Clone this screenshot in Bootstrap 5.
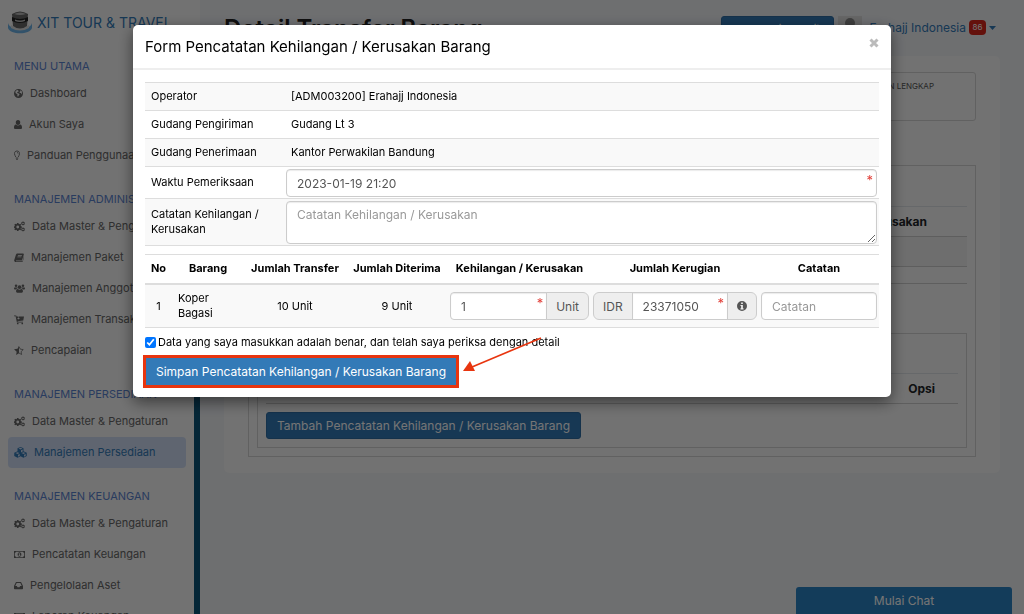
<!DOCTYPE html>
<html lang="id">
<head>
<meta charset="utf-8">
<meta name="viewport" content="width=device-width, initial-scale=1">
<title>Detail Transfer Barang</title>
<link href="https://cdn.jsdelivr.net/npm/bootstrap@5.3.0/dist/css/bootstrap.min.css" rel="stylesheet">
<style>
body{font-family:Inter,"Open Sans",sans-serif;font-size:11px;line-height:15px;color:#000;background:#eff1f5;overflow:hidden}
a{text-decoration:none}
svg{fill:currentColor}
.app{min-height:100vh;max-height:100vh;overflow:hidden}
.sidebar{width:194px;flex:none;background:#f8f8f8;padding:0 8px}
.rail{width:6px;flex:none;background:#f8f8f8;padding-top:190px}
.rail div{background:#0a5478;height:100%}
.brand-link{height:38px;padding-top:6px;gap:5px;color:#337ab7;font-size:14px;white-space:nowrap}
.menu-title{height:40px;padding:17px 6px 0;line-height:23px;font-size:11px;color:#5b83cf;white-space:nowrap;margin:0;font-weight:400}
.menu-item{height:31px;padding:0 6px;gap:7px;font-size:11px;color:#666;border-radius:4px;white-space:nowrap}
.menu-item.active{background:#cfdcf3;color:#337ab7}
.menu-item svg{height:11px;flex:none}
.page{min-width:0;padding:16px 24px}
.page-top{height:40px}
.page-top h1{font-size:24px;line-height:26px;font-weight:600;margin:0;color:#222}
.user-link{color:#337ab7;font-size:12px;gap:3px}
.btn-main{background:#337ab7;border:1px solid #2e6da4;color:#fff;border-radius:3px;font-size:12px;line-height:17px;padding:4px 10px}
.btn-main:hover{background:#286090;color:#fff}
.btn-site{width:113px;font-size:11px;padding:4px 0}
.sheet{background:#f8f8f8;border-radius:5px;padding:16px 24px}
.sheet-box{border:1px solid #d3d3d3}
.sheet-box .table{font-size:12px;margin:0}
.sheet-box .table>*>tr>*{border-color:#ccc;background:none;padding:7px 8px;box-shadow:none}
.sheet-box .table>tbody>.spacer-row>td{height:17px;padding:0}
.sheet-box .table .end-wide{padding-right:40px}
.sheet-box .table .end-narrow{padding-right:23px}
.striped-row{background:#f0f0f0}
.box-info{height:49px;font-size:8px;color:#555;padding:6px 41px;border-radius:3px;margin-bottom:44px}
.box-outer{padding:40px 8px 8px}
.box-inner{padding:39px 8px 8px;margin-top:49px}
.counter{background:#d9261c;color:#fff;font-size:8px;line-height:15px;width:17px;border-radius:4px;text-align:center}
.chat-btn{position:fixed;right:12px;bottom:0;width:216px;height:27px;background:#2a83c4;color:#fff;border:0;border-radius:3px 3px 0 0;font-size:12px}
.modal-backdrop{--bs-backdrop-opacity:.54}
.modal-dialog{width:calc(100% - 48px);max-width:758px;margin:25px auto}
.modal-content{border:0;border-radius:5px;box-shadow:0 5px 15px rgba(0,0,0,.5);color:#000}
.modal-header{height:45px;padding:0 12px;border-bottom:2px solid #eee}
.modal-title{font-size:15px;line-height:22px;font-weight:400}
.close-btn{background:none;border:0;padding:0;color:#bbb;line-height:1;margin-top:-8px}
.modal-body{padding:12px 12px 11px}
.modal-body .table{font-size:11px;margin-bottom:7px;table-layout:fixed;border-bottom:1px solid #ddd}
.modal-body .table.details{margin-bottom:8px}
.modal-body .table>*>tr>*{padding:6px;border:0;border-top:1px solid #ddd;box-shadow:none;color:#000;font-weight:400;background:#fff;vertical-align:middle}
.modal-body .table>tbody>tr:nth-child(odd)>*{background:#f9f9f9}
.modal-body .table.items>thead>tr>*{font-weight:700;text-align:center;padding:6px 0 7px;white-space:nowrap}
.modal-body .table.items>tbody>tr>*{border-top:2px solid #ddd;text-align:center}
.modal-body .table>tbody>tr>.field{padding:2px 2px 1px 1px}
.modal-body .table.items>tbody>tr>.field{padding:0 2px}
.modal-body .form-control{font-size:12px;line-height:17px;padding:4px 10px;height:28px;border:1px solid #ccc;border-radius:4px;color:#555;box-shadow:inset 0 1px 1px rgba(0,0,0,.08)}
.modal-body .form-control::placeholder{color:#999}
.modal-body textarea.form-control{height:43px;min-height:43px;display:block}
.modal-body .has-tail .form-control{border-top-right-radius:0;border-bottom-right-radius:0}
.input-group-text{font-size:12px;line-height:17px;padding:4px 9px;background:#eee;border:1px solid #ccc;color:#555}
.req{position:absolute;right:4px;top:4px;z-index:6;color:#e2403a;font-size:13px;line-height:14px}
.agree{gap:2px;font-size:11px}
.agree input{width:11px;height:11px;margin:0}
.btn.save-btn{border-radius:0;padding:5px 10px;outline:3px solid #e8350f;outline-offset:-1px;margin-top:7px}
.pointer-arrow{position:absolute;left:100%;top:-13px;margin-left:5px;fill:#e8350f;pointer-events:none}
</style>
</head>
<body class="modal-open">
<svg width="0" height="0" class="position-absolute" aria-hidden="true">
<symbol id="i-cogs" viewBox="0 0 22 20"><path fill-rule="evenodd" d="M6 3h3l.4 2 1.4.6 1.8-1.1 1.7 1.8L13.200 8l.6 1.400 2 .4v2.600l-2 .4-.6 1.400 1.100 1.700-1.700 1.800-1.800-1.100-1.400.6L9 19H6l-.4-1.800-1.400-.6-1.800 1.100L.7 15.900l1.100-1.700-.6-1.400-1.200-.4V9.800l1.200-.4L1.800 8 .7 6.300l1.700-1.800 1.800 1.100L5.600 5zm1.500 5.200a2.800 2.800 0 100 5.600 2.800 2.800 0 000-5.600z"/><path fill-rule="evenodd" d="M17 0h2l.4 1.200 1.600.2.8 1.600-.8 1.300.3 1.500-1.500 1-1 .9H17l-.9-1-1.500-.9.2-1.500-.7-1.300 1-1.500 1.500-.2zm1 2.500a1.500 1.500 0 100 3.200 1.500 1.500 0 000-3.200zM17 12h2l.4 1.200 1.600.2.800 1.600-.8 1.300.3 1.500-1.500 1-1 .9H17l-.9-1-1.500-.9.2-1.500-.7-1.300 1-1.500 1.500-.2zm1 2.500a1.500 1.500 0 100 3.200 1.500 1.500 0 000-3.200z"/></symbol>
<symbol id="i-money" viewBox="0 0 22 20"><path fill-rule="evenodd" d="M0 3h22v14H0zm4 1.600A3 3 0 011.600 7v6A3 3 0 014 15.400h14a3 3 0 012.400-2.400V7A3 3 0 0118 4.600zM11 5.500c2.400 0 3.700 2 3.700 4.500s-1.300 4.500-3.700 4.500S7.300 12.500 7.300 10 8.600 5.500 11 5.500zm-.8 1.800L8.800 8.500l.7.9.6-.4v2.700H9v1.200h3.800v-1.200h-1.100V7.300z"/></symbol>
</svg>

<div class="app d-flex">
  <nav class="sidebar" aria-label="Menu">
    <a href="#" class="brand-link d-flex align-items-center">
      <svg width="24" height="24" viewBox="0 0 24 24"><path d="M0 13c2 8 22 8 24 0v5c-2 7-22 7-24 0z" fill="#6eb3e6"/><path d="M3 15q9 6 18 0v3q-9 5-18 0z" fill="#ddd"/><path d="M4 4q8-5 16 0l-1 12q-7 5-14 0z" fill="#666"/><path d="M4 7q8 4 16 0v4q-8 4-16 0z" fill="#222"/><path d="M7 9.500q5 2 10 0v1.500q-5 2-10 0zM6 4q6-3 12 0-6 2-12 0z" fill="#bbb"/></svg>
      <span>XIT TOUR &amp; TRAVEL</span></a>
    <h2 class="menu-title">MENU UTAMA</h2>
    <a href="#" class="menu-item d-flex align-items-center"><svg width="9" viewBox="0 0 18 20"><path fill-rule="evenodd" d="M9 1a9 9 0 110 18A9 9 0 019 1zM8 3L5 3.500 2.800 6l.2 3 2 1.500 2 1-.5 2 1.500 3.500 1-2.500 2-2-.5-2L8 9.500 6 9l1-2 2.500-1zm4 0l1 2-2 2 .5 2 2.500 0 1 3 1-3-.5-3.500z"/></svg>Dashboard</a>
    <a href="#" class="menu-item d-flex align-items-center"><svg width="8" viewBox="0 0 16 20"><path d="M8 1c3 0 4.500 2.200 4.500 5S10.500 11 8 11 3.500 8.800 3.500 6 5 1 8 1zM4 10c2 2.400 6 2.400 8 0 3 0 4 3 4 6 0 2-1 3-3 3H3c-2 0-3-1-3-3 0-3 1-6 4-6z"/></svg>Akun Saya</a>
    <a href="#" class="menu-item d-flex align-items-center"><svg width="6" viewBox="0 0 12 20"><path d="M3.500 13c0-2-2.700-3.500-2.700-6.500C.8 3 3 1 6 1s5.200 2 5.200 5.500c0 3-2.700 4.500-2.700 6.500M3.500 15h5M4 17.500h4M6 4c1.500 0 2.300.8 2.300 2" fill="none" stroke="currentColor" stroke-width="1.700"/></svg>Panduan Penggunaan</a>
    <h2 class="menu-title">MANAJEMEN ADMINISTRASI</h2>
    <a href="#" class="menu-item d-flex align-items-center"><svg width="11"><use href="#i-cogs"/></svg>Data Master &amp; Pengaturan</a>
    <a href="#" class="menu-item d-flex align-items-center"><svg width="10" viewBox="0 0 20 20"><path fill-rule="evenodd" d="M7 2h11c1.500 0 2 1 1.500 2.500L16 16H5c-1.500 0-1.500 1.500 0 1.500h12L20 7c.5 1 0 2 0 3l-2.500 8q-.5 1-2 1H4c-3 0-4-2-3.500-4L4 4c.5-1 1.500-2 3-2zm1 3l-.4 1.400h8L16 5zm-1 3l-.4 1.400h8L15 8z"/></svg>Manajemen Paket</a>
    <a href="#" class="menu-item d-flex align-items-center"><svg width="11" viewBox="0 0 24 20"><circle cx="12" cy="7" r="4"/><circle cx="4.500" cy="4" r="2.800"/><circle cx="19.500" cy="4" r="2.800"/><path d="M8 11q4 3 8 0c3 0 3.500 3 3.500 5.500q0 2.500-2.500 2.500H7q-2.500 0-2.500-2.500C4.500 14 5 11 8 11zM2 7q2.500 1.500 5 0 0 2 .8 3Q5 10 4 12H2q-2 0-2-1.500Q0 7 2 7zM22 7q-2.500 1.500-5 0 0 2-.8 3 2.800 0 3.800 2h2q2 0 2-1.500Q24 7 22 7z"/></svg>Manajemen Anggota</a>
    <a href="#" class="menu-item d-flex align-items-center"><svg width="10" viewBox="0 0 20 20"><path d="M0 2h4.500l.6 2H9v3H6l3 3 3-3h-2V4h10l-1.500 8L7 13.300l.3 1.200H18V16H5.800L3.200 3.600H0z"/><circle cx="7.500" cy="18" r="1.700"/><circle cx="16.500" cy="18" r="1.700"/></svg>Manajemen Transaksi</a>
    <a href="#" class="menu-item d-flex align-items-center"><svg width="10" viewBox="0 0 20 20"><path d="M10 1v14.500L4.200 19l1.200-6.600L0 7.700l7-1z"/><path d="M10 2l2.500 5.300 6 .9-4.300 4.100 1 5.700L10 15" fill="none" stroke="currentColor" stroke-width="1.500"/></svg>Pencapaian</a>
    <h2 class="menu-title">MANAJEMEN PERSEDIAAN</h2>
    <a href="#" class="menu-item d-flex align-items-center"><svg width="11"><use href="#i-cogs"/></svg>Data Master &amp; Pengaturan</a>
    <a href="#" class="menu-item active d-flex align-items-center"><svg width="13" viewBox="0 0 26 22"><path fill-rule="evenodd" d="M13 0l6 2.500v6.200l6.500 2.800v6.700L19 21.500l-6-2.800-6 2.800-6.500-3.300v-6.700L7 8.700V2.500zm-4 3.200L13 5l4-1.800-4-1.500zM3 12l4 1.800L11 12l-4-1.600zm12 0l4 1.800 4-1.800-4-1.600zm-1-1l3.400-2V5L14 6.500zm-6 8.500l3.500-2V14L8 15.300zm12 0l3.500-2V14L20 15.300z"/></svg>Manajemen Persediaan</a>
    <h2 class="menu-title">MANAJEMEN KEUANGAN</h2>
    <a href="#" class="menu-item d-flex align-items-center"><svg width="11"><use href="#i-cogs"/></svg>Data Master &amp; Pengaturan</a>
    <a href="#" class="menu-item d-flex align-items-center"><svg width="11"><use href="#i-money"/></svg>Pencatatan Keuangan</a>
    <a href="#" class="menu-item d-flex align-items-center"><svg width="9" viewBox="0 0 18 20"><path fill-rule="evenodd" d="M4 3h10l4 8v5q0 1.500-1.500 1.500h-15Q0 17.500 0 16v-5zm1.300 2L2.500 11h3.300L7 13.500h4l1.200-2.500h3.300L12.700 5z"/></svg>Pengelolaan Aset</a>
    <a href="#" class="menu-item d-flex align-items-center"><svg width="11"><use href="#i-money"/></svg>Laporan Keuangan</a>
  </nav>
  <div class="rail"><div></div></div>

  <main class="page flex-grow-1">
    <header class="page-top d-flex align-items-start">
      <h1 class="me-auto">Detail Transfer Barang</h1>
      <button type="button" class="btn btn-main btn-site me-1"><svg width="9" height="9" viewBox="0 0 9 9"><path d="M0 2h4v1H1v5h5V5h1v4H0zM5 0h4v4L7.500 2.500 4.500 5.500l-1-1 3-3z"/></svg> Kembali Website</button>
      <svg width="24" height="24" viewBox="0 0 24 24"><path fill="#ddd" d="M0 0h24v24H0z"/><circle cx="12" cy="7" r="5" fill="#888"/><path d="M3 24q0-10 9-10t9 10z" fill="#888"/></svg>
      <a href="#" class="user-link d-flex align-items-center ms-2 mt-1 me-1"><span>Erahajj Indonesia</span><span class="counter">86</span>
      <svg width="7" height="4" viewBox="0 0 7 4"><path d="M0 0h7L3.500 4z"/></svg></a>
    </header>
    <section class="sheet">
      <div class="sheet-box box-info text-end">CATATAN LENGKAP</div>
      <div class="sheet-box box-outer">
        <table class="table">
          <thead><tr><th class="border-top">Barang</th><th class="text-end border-top end-wide">Kerusakan</th></tr></thead>
          <tbody><tr class="striped-row"><td>&nbsp;</td><td></td></tr><tr class="spacer-row"><td colspan="2"></td></tr></tbody>
        </table>
        <div class="sheet-box box-inner">
          <table class="table">
            <thead><tr><th class="border-top">No</th><th class="text-end border-top end-narrow">Opsi</th></tr></thead>
          </table>
          <button type="button" class="btn btn-main mt-2">Tambah Pencatatan Kehilangan / Kerusakan Barang</button>
        </div>
      </div>
    </section>
  </main>
</div>
<button type="button" class="chat-btn">Mulai Chat</button>

<div class="modal-backdrop show"></div>
<div class="modal show d-block" tabindex="-1" role="dialog" aria-labelledby="formTitle">
  <div class="modal-dialog"><div class="modal-content">
    <div class="modal-header">
      <h5 class="modal-title" id="formTitle">Form Pencatatan Kehilangan / Kerusakan Barang</h5>
      <button type="button" class="close-btn" aria-label="Tutup"><svg width="10" height="10" viewBox="0 0 10 10"><path d="M1.500 1.500l7 7M8.500 1.500l-7 7" stroke="currentColor" stroke-width="3"/></svg></button>
    </div>
    <div class="modal-body">
      <table class="table details">
        <colgroup><col style="width:140px"><col></colgroup>
        <tbody>
          <tr><th scope="row">Operator</th><td>[ADM003200] Erahajj Indonesia</td></tr>
          <tr><th scope="row">Gudang Pengiriman</th><td>Gudang Lt 3</td></tr>
          <tr><th scope="row">Gudang Penerimaan</th><td>Kantor Perwakilan Bandung</td></tr>
          <tr><th scope="row"><label for="waktu">Waktu Pemeriksaan</label></th><td class="field"><div class="position-relative"><input id="waktu" class="form-control" value="2023-01-19 21:20"><span class="req">*</span></div></td></tr>
          <tr><th scope="row"><label for="catatan">Catatan Kehilangan / Kerusakan</label></th><td class="field"><textarea id="catatan" class="form-control" placeholder="Catatan Kehilangan / Kerusakan"></textarea></td></tr>
        </tbody>
      </table>
      <table class="table items">
        <colgroup><col style="width:27px"><col style="width:72px"><col style="width:102px"><col style="width:102px"><col style="width:143px"><col style="width:168px"><col></colgroup>
        <thead><tr><th>No</th><th>Barang</th><th>Jumlah Transfer</th><th>Jumlah Diterima</th><th>Kehilangan / Kerusakan</th><th>Jumlah Kerugian</th><th>Catatan</th></tr></thead>
        <tbody><tr>
          <td>1</td><td class="text-start">Koper<br>Bagasi</td><td>10 Unit</td><td>9 Unit</td>
          <td class="field"><div class="input-group flex-nowrap"><div class="position-relative flex-grow-1 has-tail"><input class="form-control" aria-label="Jumlah rusak" value="1"><span class="req">*</span></div><span class="input-group-text">Unit</span></div></td>
          <td class="field"><div class="input-group flex-nowrap"><span class="input-group-text">IDR</span><div class="position-relative flex-grow-1 has-tail"><input class="form-control rounded-0" aria-label="Jumlah kerugian" value="23371050"><span class="req">*</span></div><span class="input-group-text"><svg width="10" height="10" viewBox="0 0 20 20"><path fill-rule="evenodd" d="M10 0a10 10 0 110 20 10 10 0 010-20zM8.300 3v3h3.400V3zM7 8v2h1.300v4.500H7v2.300h6v-2.300h-1.300V8z"/></svg></span></div></td>
          <td class="field"><input class="form-control" aria-label="Catatan" placeholder="Catatan"></td>
        </tr></tbody>
      </table>
      <div class="agree d-flex align-items-center"><input type="checkbox" id="setuju" checked><label for="setuju">Data yang saya masukkan adalah benar, dan telah saya periksa dengan detail</label></div>
      <div class="position-relative d-inline-block">
        <button type="button" class="btn btn-main save-btn">Simpan Pencatatan Kehilangan / Kerusakan Barang</button>
        <svg class="pointer-arrow" width="84" height="40" viewBox="0 0 84 40" aria-hidden="true"><path d="M79 1L10 30" stroke="#e8350f" stroke-width="1.700"/><path d="M1 34l7-10 5 10z"/></svg>
      </div>
    </div>
  </div></div>
</div>
<script src="https://cdn.jsdelivr.net/npm/bootstrap@5.3.0/dist/js/bootstrap.bundle.min.js"></script>
</body>
</html>
